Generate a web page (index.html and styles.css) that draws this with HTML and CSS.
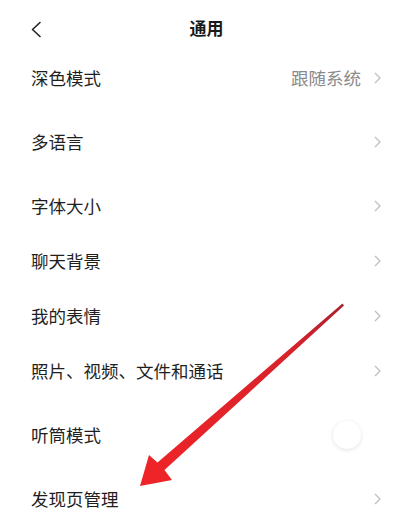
FILE: index.html
```html
<!DOCTYPE html>
<html lang="zh-CN">
<head>
<meta charset="utf-8">
<title>通用</title>
<link rel="stylesheet" href="styles.css">
</head>
<body>
<div class="page">
  <header class="header">
    <svg class="back" width="12" height="17" viewBox="0 0 12 17"><path d="M10 1.5 L2.5 8.5 L10 15.5" fill="none" stroke="#222" stroke-width="1.6" stroke-linecap="round" stroke-linejoin="round"/></svg>
    <h1 class="title">通用</h1>
  </header>
  <section class="group">
    <div class="row"><span class="label">深色模式</span><span class="right"><span class="value">跟随系统</span><svg class="chev" width="7" height="12" viewBox="0 0 7 12"><path d="M1 1 L6 6 L1 11" fill="none" stroke="#bdbdbd" stroke-width="1.2"/></svg></span></div>
  </section>
  <section class="group">
    <div class="row"><span class="label">多语言</span><span class="right"><svg class="chev" width="7" height="12" viewBox="0 0 7 12"><path d="M1 1 L6 6 L1 11" fill="none" stroke="#bdbdbd" stroke-width="1.2"/></svg></span></div>
  </section>
  <section class="group">
    <div class="row"><span class="label">字体大小</span><span class="right"><svg class="chev" width="7" height="12" viewBox="0 0 7 12"><path d="M1 1 L6 6 L1 11" fill="none" stroke="#bdbdbd" stroke-width="1.2"/></svg></span></div>
    <div class="row"><span class="label">聊天背景</span><span class="right"><svg class="chev" width="7" height="12" viewBox="0 0 7 12"><path d="M1 1 L6 6 L1 11" fill="none" stroke="#bdbdbd" stroke-width="1.2"/></svg></span></div>
    <div class="row"><span class="label">我的表情</span><span class="right"><svg class="chev" width="7" height="12" viewBox="0 0 7 12"><path d="M1 1 L6 6 L1 11" fill="none" stroke="#bdbdbd" stroke-width="1.2"/></svg></span></div>
    <div class="row"><span class="label">照片、视频、文件和通话</span><span class="right"><svg class="chev" width="7" height="12" viewBox="0 0 7 12"><path d="M1 1 L6 6 L1 11" fill="none" stroke="#bdbdbd" stroke-width="1.2"/></svg></span></div>
  </section>
  <section class="group">
    <div class="row"><span class="label">听筒模式</span><span class="right"><span class="switch"><span class="knob"></span></span></span></div>
  </section>
  <section class="group">
    <div class="row"><span class="label">发现页管理</span><span class="right"><svg class="chev" width="7" height="12" viewBox="0 0 7 12"><path d="M1 1 L6 6 L1 11" fill="none" stroke="#bdbdbd" stroke-width="1.2"/></svg></span></div>
  </section>
  <svg class="arrow" width="403" height="529" viewBox="0 0 403 529">
    <defs>
      <linearGradient id="ag" x1="343" y1="304" x2="150" y2="480" gradientUnits="userSpaceOnUse">
        <stop offset="0" stop-color="#a8202e"/>
        <stop offset="0.25" stop-color="#d8222a"/>
        <stop offset="1" stop-color="#ee2428"/>
      </linearGradient>
    </defs>
    <polygon points="140,486 149,455 157.5,462.5 342.5,303.5 344,305.5 164.5,470 172,480" fill="url(#ag)"/>
  </svg>
</div>
</body>
</html>
```
FILE: styles.css
```css
html, body {
  margin: 0;
  padding: 0;
  background: #ffffff;
}
body {
  font-family: "Noto Sans CJK SC", "Noto Sans", sans-serif;
  color: #1f1f1f;
}
.page {
  position: relative;
  width: 403px;
  height: 529px;
  overflow: hidden;
  background: #fff;
}
.header {
  height: 50px;
  display: flex;
  align-items: center;
  justify-content: center;
  position: relative;
}
.back {
  position: absolute;
  left: 30px;
  top: 21px;
}
.title {
  margin: 0 0 -5px 10px;
  font-size: 17px;
  font-weight: 700;
  color: #1a1a1a;
  line-height: 1;
}
.group {
  margin-bottom: 9px;
}
.row {
  height: 55px;
  display: flex;
  align-items: center;
  justify-content: space-between;
  padding: 0 22px 0 31px;
}
.label {
  font-size: 17.5px;
  line-height: 1;
  color: #1f1f1f;
}
.right {
  display: flex;
  align-items: center;
  gap: 13px;
}
.value {
  font-size: 17.5px;
  line-height: 1;
  color: #8a8a8a;
}
.chev {
  display: block;
}
.switch {
  width: 48px;
  height: 28px;
  display: flex;
  align-items: center;
}
.knob {
  width: 28px;
  height: 28px;
  border-radius: 50%;
  background: #fff;
  box-shadow: 0 1px 4px rgba(0, 0, 0, 0.12);
}
.arrow {
  position: absolute;
  left: 0;
  top: 0;
  pointer-events: none;
}
```
